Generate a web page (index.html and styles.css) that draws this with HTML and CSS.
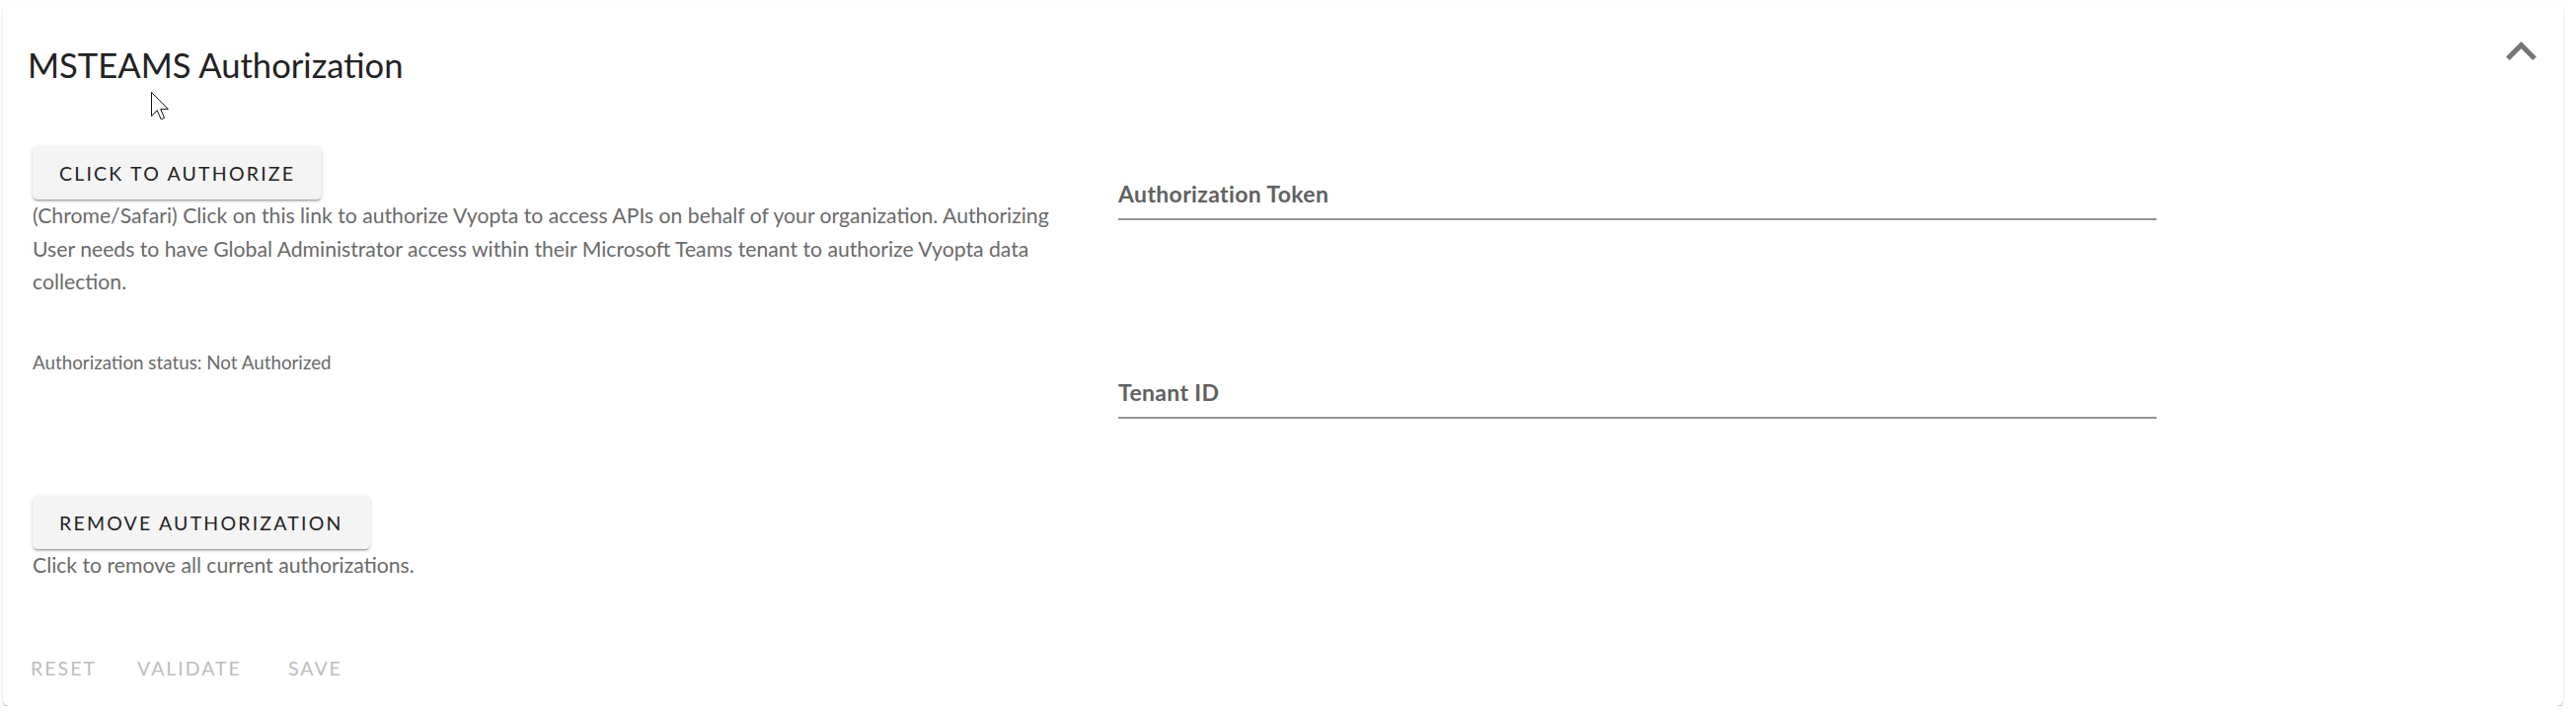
FILE: index.html
```html
<!DOCTYPE html>
<html lang="en">
<head>
<meta charset="utf-8">
<title>MSTEAMS Authorization</title>
<link rel="stylesheet" href="styles.css">
</head>
<body>
<section class="card">
  <header class="card-header">
    <h2 class="title">MSTEAMS Authorization</h2>
    <button class="collapse-btn" aria-label="Collapse">
      <svg class="chevron" viewBox="6 8 12 7.41" width="31" height="19"><path d="M12 8l-6 6 1.41 1.41L12 10.83l4.59 4.58L18 14z"/></svg>
    </button>
  </header>
  <div class="card-body">
    <div class="col-left">
      <button class="raised-btn">Click to authorize</button>
      <p class="help">(Chrome/Safari) Click on this link to authorize Vyopta to access APIs on behalf of your organization. Authorizing User needs to have Global Administrator access within their Microsoft Teams tenant to authorize Vyopta data collection.</p>
      <p class="status">Authorization status: Not Authorized</p>
      <button class="raised-btn remove-btn">Remove authorization</button>
      <p class="help">Click to remove all current authorizations.</p>
    </div>
    <div class="col-right">
      <div class="field"><label class="field-label">Authorization Token</label></div>
      <div class="field field-second"><label class="field-label">Tenant ID</label></div>
    </div>
  </div>
  <footer class="card-actions">
    <button class="flat-btn">Reset</button>
    <button class="flat-btn">Validate</button>
    <button class="flat-btn">Save</button>
  </footer>
  <svg class="cursor" width="20" height="30" viewBox="0 0 20 30"><path d="M0.5 0.5 L0.5 24.5 L6.2 18.8 L10.2 27.8 L13.6 26.3 L9.7 17.6 L17.4 17.6 Z" fill="#fff" stroke="#111" stroke-width="1" stroke-linejoin="miter"/></svg>
</section>
</body>
</html>
```
FILE: styles.css
```css
* { box-sizing: border-box; }

html, body {
  margin: 0;
  padding: 0;
  background: #ffffff;
}

body {
  font-family: "Lato", "Open Sans", sans-serif;
  color: #222222;
}

.card {
  position: relative;
  margin: 4px 13px 0 3px;
  height: 711px;
  background: #ffffff;
  border-radius: 6px;
  box-shadow: 0 2px 1px -1px rgba(0,0,0,0.25), 0 1px 1px 0 rgba(0,0,0,0.14), 0 1px 3px 0 rgba(0,0,0,0.12);
}

.card-header {
  display: flex;
  justify-content: space-between;
  align-items: flex-start;
  padding: 40px 27px 0 25px;
}

.title {
  margin: 0;
  font-size: 34.6px;
  line-height: 44px;
  font-weight: 400;
  color: #222222;
}

.collapse-btn {
  border: 0;
  background: none;
  padding: 0;
  margin-top: -2px;
  line-height: 0;
  cursor: pointer;
}

.chevron { fill: #757575; display: block; }

.card-body {
  display: grid;
  grid-template-columns: 1067px 1052px;
  column-gap: 33px;
  padding: 60px 0 0 30px;
}

.col-left {
  display: flex;
  flex-direction: column;
  align-items: flex-start;
}

.raised-btn {
  height: 54px;
  padding: 0 27px;
  border: 0;
  border-radius: 5px;
  background: #f4f4f4;
  color: #222222;
  font-family: inherit;
  font-size: 19.5px;
  letter-spacing: 2.2px;
  text-transform: uppercase;
  box-shadow: 0 3px 1px -2px rgba(0,0,0,0.2), 0 2px 2px 0 rgba(0,0,0,0.14), 0 1px 5px 0 rgba(0,0,0,0.12);
}

.help {
  margin: 0;
  font-size: 21.2px;
  line-height: 33.5px;
  color: #6a6a6a;
}

.status {
  margin: 52.5px 0 0;
  font-size: 18.8px;
  line-height: 24px;
  color: #6a6a6a;
}

.remove-btn { margin-top: 123px; }

.col-right {
  display: flex;
  flex-direction: column;
  padding-top: 36px;
}

.field {
  padding-bottom: 13px;
  border-bottom: 2px solid #959595;
}

.field-second { margin-top: 162px; }

.field-label {
  display: block;
  font-size: 23px;
  line-height: 24px;
  font-weight: 700;
  letter-spacing: 0.35px;
  color: #616161;
}

.card-actions {
  display: flex;
  gap: 16px;
  padding: 59.5px 0 12px 15px;
}

.flat-btn {
  height: 54px;
  min-width: 93px;
  padding: 0 12px;
  border: 0;
  background: none;
  color: #bdbdbd;
  font-family: inherit;
  font-size: 19.5px;
  letter-spacing: 2px;
  text-transform: uppercase;
}

.cursor {
  position: absolute;
  left: 150px;
  top: 89px;
}
```
